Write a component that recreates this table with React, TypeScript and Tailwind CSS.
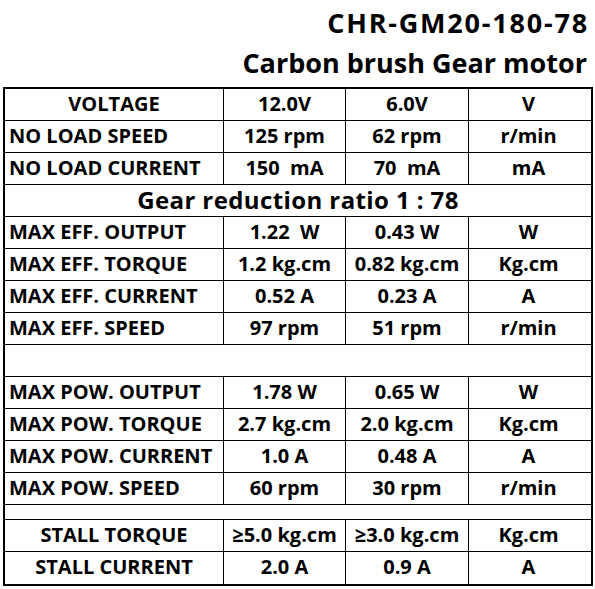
import React from 'react';

type Row =
  | { kind: 'data'; label: string; center?: boolean; v12: string; v6: string; unit: string }
  | { kind: 'banner'; text: string }
  | { kind: 'blank'; h: 'tall' | 'thin' };

const ROWS: Row[] = [
  { kind: 'data', label: 'VOLTAGE', center: true, v12: '12.0V', v6: '6.0V', unit: 'V' },
  { kind: 'data', label: 'NO LOAD SPEED', v12: '125 rpm', v6: '62 rpm', unit: 'r/min' },
  { kind: 'data', label: 'NO LOAD CURRENT', v12: '150  mA', v6: '70  mA', unit: 'mA' },
  { kind: 'banner', text: 'Gear reduction ratio 1 : 78' },
  { kind: 'data', label: 'MAX EFF. OUTPUT', v12: '1.22  W', v6: '0.43 W', unit: 'W' },
  { kind: 'data', label: 'MAX EFF. TORQUE', v12: '1.2 kg.cm', v6: '0.82 kg.cm', unit: 'Kg.cm' },
  { kind: 'data', label: 'MAX EFF. CURRENT', v12: '0.52 A', v6: '0.23 A', unit: 'A' },
  { kind: 'data', label: 'MAX EFF. SPEED', v12: '97 rpm', v6: '51 rpm', unit: 'r/min' },
  { kind: 'blank', h: 'tall' },
  { kind: 'data', label: 'MAX POW. OUTPUT', v12: '1.78 W', v6: '0.65 W', unit: 'W' },
  { kind: 'data', label: 'MAX POW. TORQUE', v12: '2.7 kg.cm', v6: '2.0 kg.cm', unit: 'Kg.cm' },
  { kind: 'data', label: 'MAX POW. CURRENT', v12: '1.0 A', v6: '0.48 A', unit: 'A' },
  { kind: 'data', label: 'MAX POW. SPEED', v12: '60 rpm', v6: '30 rpm', unit: 'r/min' },
  { kind: 'blank', h: 'thin' },
  { kind: 'data', label: 'STALL TORQUE', center: true, v12: '≥5.0 kg.cm', v6: '≥3.0 kg.cm', unit: 'Kg.cm' },
  { kind: 'data', label: 'STALL CURRENT', center: true, v12: '2.0 A', v6: '0.9 A', unit: 'A' },
];

const cols = 'grid grid-cols-[219px_122px_123px_119px]';
const cell = 'flex items-center justify-center pb-[2px] whitespace-pre';

export default function App() {
  return (
    <div className="w-[595px] h-[589px] bg-white text-black font-['Open_Sans','Noto_Sans',sans-serif] font-bold overflow-hidden">
      {/* Title */}
      <div className="h-[87px] pt-[3px] pr-[8px] text-right text-[27px] leading-[40px]">
        <div className="tracking-[1.8px] mr-[-2px]">CHR-GM20-180-78</div>
        <div>Carbon brush Gear motor</div>
      </div>

      {/* Spec table */}
      <div className="ml-[3px] w-[590px] border-2 border-black">
        {ROWS.map((row, i) => {
          const last = i === ROWS.length - 1;
          const rowBorder = last ? '' : 'border-b border-black';
          if (row.kind === 'banner') {
            return (
              <div key={i} className={`h-[32px] pb-[2px] flex items-center justify-center text-[24px] tracking-[0.4px] ${rowBorder}`}>
                {row.text}
              </div>
            );
          }
          if (row.kind === 'blank') {
            return <div key={i} className={`${row.h === 'tall' ? 'h-[32px]' : 'h-[15px]'} ${rowBorder}`} />;
          }
          return (
            <div key={i} className={`${cols} h-[32px] text-[20px] ${rowBorder}`}>
              <div
                className={`flex items-center pb-[2px] border-r border-black whitespace-pre ${
                  row.center ? 'justify-center' : 'pl-[4px]'
                }`}
              >
                {row.label}
              </div>
              <div className={`${cell} border-r border-black`}>{row.v12}</div>
              <div className={`${cell} border-r border-black`}>{row.v6}</div>
              <div className={cell}>{row.unit}</div>
            </div>
          );
        })}
      </div>
    </div>
  );
}
